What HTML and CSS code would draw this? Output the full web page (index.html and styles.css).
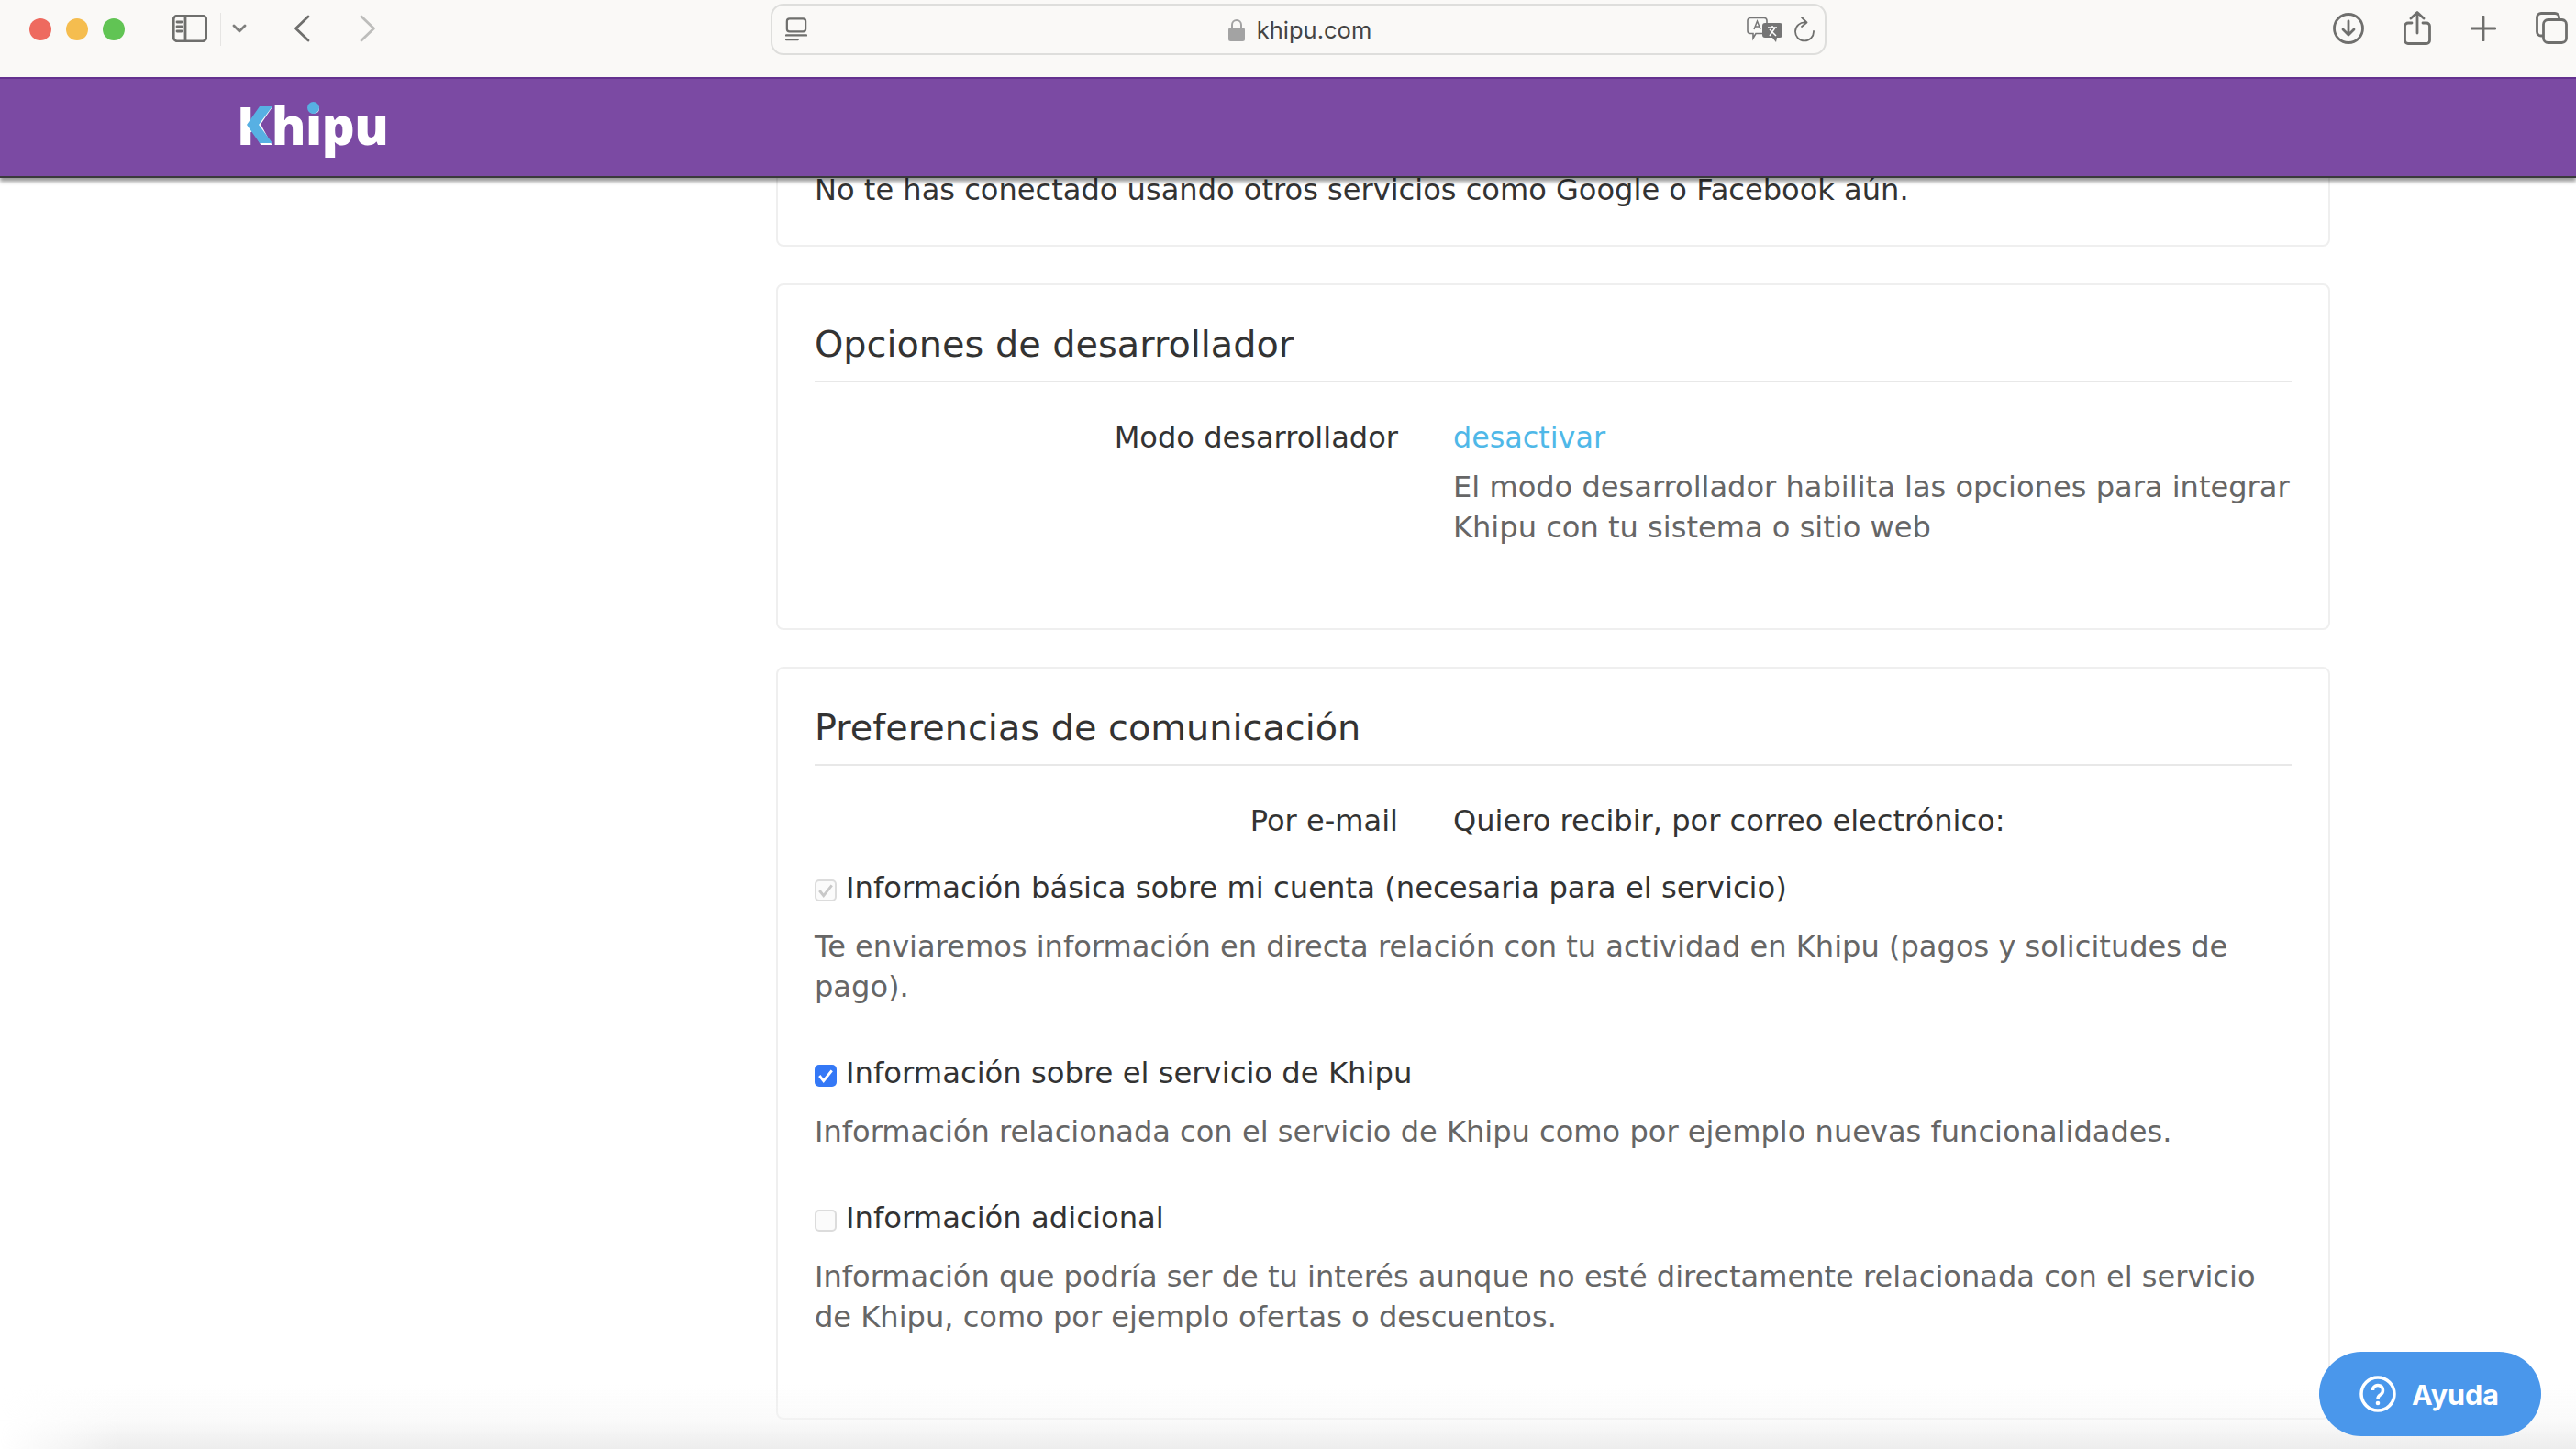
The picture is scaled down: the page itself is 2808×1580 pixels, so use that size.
FILE: index.html
```html
<!DOCTYPE html>
<html>
<head>
  <title>Khipu</title>
  <link rel="stylesheet" href="styles.css">
</head>
<body>
  <div class="toolbar">
    <div class="lights">
      <span class="light red"></span>
      <span class="light yellow"></span>
      <span class="light green"></span>
    </div>
    <svg class="ico sidebar-ico" width="38" height="30" viewBox="0 0 38 30"><rect x="1.2" y="1.2" width="35.6" height="27.6" rx="4"/><path d="M14 1.5v27M5 8h5M5 13h5M5 18h5"/></svg>
    <span class="divider"></span>
    <svg class="ico menu-ico" width="16" height="10" viewBox="0 0 16 10"><path d="M2 2l6 6 6-6"/></svg>
    <svg class="ico back-ico" width="18" height="30" viewBox="0 0 18 30"><path d="M16 2L2.500 15 16 28"/></svg>
    <svg class="ico fwd-ico" width="18" height="30" viewBox="0 0 18 30"><path d="M2 2l13.500 13L2 28"/></svg>
    <div class="address">
      <svg class="ico reader-ico" width="24" height="28" viewBox="0 0 26 28"><rect x="2" y="1.500" width="22" height="15" rx="3"/><path d="M1 21h24M1 26h14"/></svg>
      <div class="url">
        <svg width="18" height="25" viewBox="0 0 18 25"><path d="M4 11V7a5 5 0 0 1 10 0v4" fill="none" stroke="#a3a3a3" stroke-width="2"/><rect y="10" width="18" height="15" rx="2.500" fill="#a3a3a3"/></svg>
        <span>khipu.com</span>
      </div>
      <svg class="translate-ico" width="40" height="28" viewBox="0 0 40 28"><path d="M4 1.500h15a3 3 0 0 1 3 3v11a3 3 0 0 1-3 3h-9l-3 5v-5H4a3 3 0 0 1-3-3v-11a3 3 0 0 1 3-3z" fill="#fafaf8" stroke="#777" stroke-width="1.600"/><path d="M8 14l3.500-9 3.500 9M9.500 11h4" fill="none" stroke="#777" stroke-width="1.500"/><path d="M20 7h16a3 3 0 0 1 3 3v10a3 3 0 0 1-3 3h-3l-1 5-4-5h-8a3 3 0 0 1-3-3V10a3 3 0 0 1 3-3z" fill="#757575"/><path d="M23 12h10M28 10v2M25 21l6-9M25 14l7 7" fill="none" stroke="#fff" stroke-width="1.500"/></svg>
      <svg class="ico reload-ico" width="24" height="28" viewBox="0 0 24 28"><path d="M13 6.500A10 10 0 1 0 22 16M9 1l5.500 5.500L9 11"/></svg>
    </div>
    <div class="tools">
      <svg class="ico" width="34" height="34" viewBox="0 0 34 34"><circle cx="17" cy="17" r="15.500"/><path d="M17 9v15M11 18l6 6 6-6"/></svg>
      <svg class="ico" width="30" height="37" viewBox="0 0 30 37"><path d="M9 13H5a3.500 3.500 0 0 0-3.500 3.500V32A3.500 3.500 0 0 0 5 35.500h20a3.500 3.500 0 0 0 3.500-3.500V16.500A3.500 3.500 0 0 0 25 13h-4M15 24V2M8 8l7-6.500L22 8"/></svg>
      <svg class="ico" width="28" height="28" viewBox="0 0 28 28"><path d="M14 1v26M1 14h26"/></svg>
      <svg class="ico" width="35" height="35" viewBox="0 0 35 35"><path d="M7 26H6a4.500 4.500 0 0 1-4.500-4.500V6A4.500 4.500 0 0 1 6 1.500h15A4.500 4.500 0 0 1 25.500 6v2"/><rect x="8.500" y="8.500" width="25" height="25" rx="5"/></svg>
    </div>
  </div>

  <header class="topbar">
    <div class="logo"><span class="logo-k">K<svg width="28" height="40" viewBox="0 0 28 40"><polygon points="14,0 28,0 13,20 28,40 14,40 0,20" fill="#57b0e3"/></svg></span>h<span class="logo-i">i</span>pu</div>
  </header>

  <main class="content">
    <section class="card first-card">
      <p class="plain">No te has conectado usando otros servicios como Google o Facebook aún.</p>
    </section>

    <section class="card">
      <h2>Opciones de desarrollador</h2>
      <div class="row">
        <div class="row-label">Modo desarrollador</div>
        <div>
          <a class="link" href="#">desactivar</a>
          <p class="hint">El modo desarrollador habilita las opciones para integrar Khipu con tu sistema o sitio web</p>
        </div>
      </div>
    </section>

    <section class="card prefs">
      <h2>Preferencias de comunicación</h2>
      <div class="row">
        <div class="row-label">Por e-mail</div>
        <div class="plain">Quiero recibir, por correo electrónico:</div>
      </div>

      <div class="option">
        <label class="check-line"><span class="box locked"><svg width="18" height="16" viewBox="0 0 16 14"><path d="M2 7l4 5 8-10" fill="none" stroke="#c8c8c8" stroke-width="2.500"/></svg></span>Información básica sobre mi cuenta (necesaria para el servicio)</label>
        <p class="hint">Te enviaremos información en directa relación con tu actividad en Khipu (pagos y solicitudes de pago).</p>
      </div>

      <div class="option">
        <label class="check-line"><span class="box checked"><svg width="18" height="16" viewBox="0 0 16 14"><path d="M2 7l4 5 8-10" fill="none" stroke="#fff" stroke-width="2.500"/></svg></span>Información sobre el servicio de Khipu</label>
        <p class="hint">Información relacionada con el servicio de Khipu como por ejemplo nuevas funcionalidades.</p>
      </div>

      <div class="option">
        <label class="check-line"><span class="box"></span>Información adicional</label>
        <p class="hint">Información que podría ser de tu interés aunque no esté directamente relacionada con el servicio de Khipu, como por ejemplo ofertas o descuentos.</p>
      </div>
    </section>
  </main>

  <div class="bottom-fade"></div>

  <button class="help" type="button">
    <svg width="40" height="40" viewBox="0 0 40 40"><circle cx="20" cy="20" r="18" fill="none" stroke="#fff" stroke-width="3.500"/><path d="M14.500 16a5.500 5.500 0 1 1 8.500 4.600c-2 1.300-3 2-3 4.400" fill="none" stroke="#fff" stroke-width="3.500"/><circle cx="20" cy="30" r="2.300" fill="#fff"/></svg>
    Ayuda
  </button>
</body>
</html>
```

FILE: styles.css
```css
html, body {
  margin: 0;
  height: 100%;
}

body {
  position: relative;
  height: 1580px;
  overflow: hidden;
  background: #fff;
  font-family: 'DejaVu Sans', Verdana, sans-serif;
  color: #333;
}

.toolbar {
  position: relative;
  z-index: 3;
  display: flex;
  align-items: flex-start;
  height: 84px;
  background: #faf9f7;
}

.ico {
  fill: none;
  stroke: #6f6f6d;
  stroke-width: 2.800;
  stroke-linecap: round;
  stroke-linejoin: round;
  flex: none;
}

.lights {
  display: flex;
  gap: 16px;
  margin: 20px 0 0 32px;
}

.light {
  width: 24px;
  height: 24px;
  border-radius: 50%;
}

.red { background: #ee6a5f; }
.yellow { background: #f5bd4f; }
.green { background: #61c454; }

.sidebar-ico { margin: 16px 0 0 52px; }

.divider {
  width: 1px;
  height: 36px;
  margin: 14px 0 0 14px;
  background: #e6e5e3;
}

.menu-ico {
  margin: 26px 0 0 12px;
  stroke: #7f7f7d;
}

.back-ico { margin: 16px 0 0 51px; }

.fwd-ico {
  margin: 16px 0 0 54px;
  stroke: #bdbdbb;
}

.address {
  display: flex;
  align-items: center;
  width: 1151px;
  height: 56px;
  margin: 4px 0 0 430px;
  padding: 0 10px 0 14px;
  box-sizing: border-box;
  border: 2px solid #dededc;
  border-radius: 14px;
}

.reader-ico { stroke-width: 2.400; }

.url {
  flex: 1;
  display: flex;
  align-items: center;
  justify-content: center;
  gap: 13px;
  margin-left: 50px;
  font-family: 'Inter', sans-serif;
  font-size: 25.500px;
  color: #444;
}

.translate-ico { flex: none; }

.reload-ico {
  margin-left: 11px;
  stroke-width: 1.800;
}

.tools {
  display: flex;
  align-items: center;
  gap: 43px;
  margin: 12px 0 0 552px;
}

.topbar {
  position: relative;
  z-index: 2;
  height: 110px;
  box-sizing: border-box;
  padding-left: 258px;
  background: #7b4aa3;
  border-top: 2px solid #643190;
  border-bottom: 2px solid #3a3a3c;
  box-shadow: 0 4px 4px rgba(0,0,0,0.4);
}

.logo {
  font-family: 'Open Sans', sans-serif;
  font-size: 56px;
  font-weight: 800;
  line-height: 1;
  color: #fff;
  letter-spacing: -0.500px;
  padding-top: 22px;
}

.logo-k,
.logo-i {
  position: relative;
  display: inline-block;
}

.logo-k svg {
  position: absolute;
  left: 11px;
  top: 8px;
}

/* blue dot over the i */
.logo-i::after {
  content: "";
  position: absolute;
  left: 50%;
  top: 3px;
  width: 13px;
  height: 13px;
  margin-left: -6.500px;
  border-radius: 50%;
  background: #57b0e3;
}

.content {
  width: 1694px;
  margin: 0 0 0 846px;
}

.card {
  box-sizing: border-box;
  border: 2px solid #efefef;
  border-radius: 8px;
  padding: 0 40px 88px;
  margin-bottom: 40px;
}

.first-card {
  height: 99px;
  margin-top: -24px;
  padding-top: 13px;
  padding-bottom: 0;
}

.plain {
  margin: 0;
  font-size: 32.100px;
  line-height: 44px;
  color: #333;
}

h2 {
  margin: 0 0 38px;
  padding: 39px 0 15px;
  font-size: 39.800px;
  font-weight: 400;
  line-height: 50px;
  color: #333;
  border-bottom: 2px solid #e8e8e8;
}

.row {
  display: grid;
  grid-template-columns: 636px 1fr;
  column-gap: 60px;
  font-size: 32.100px;
  line-height: 44px;
}

.row-label {
  text-align: right;
}

.link {
  font-size: 31.800px;
  color: #4fb8e8;
  text-decoration: none;
}

.hint {
  margin: 10px 0 0;
  font-size: 32.100px;
  line-height: 44px;
  color: #666;
}

.row + .option { margin-top: 29px; }

.option { margin-bottom: 50px; }

.option:last-child { margin-bottom: 0; }

.check-line {
  display: flex;
  align-items: center;
  gap: 10px;
  font-size: 32.250px;
  line-height: 44px;
  color: #333;
}

.option .hint { margin-top: 20px; }

.box {
  flex: none;
  display: flex;
  align-items: center;
  justify-content: center;
  width: 24px;
  height: 24px;
  margin-top: 6px;
  box-sizing: border-box;
  border: 2px solid #dcdcdc;
  border-radius: 5px;
  background: #fbfbfb;
}

.box.checked {
  border: 0;
  background: #3478f6;
}

/* soft grey fade at the window bottom, rounded off at the corners */
.bottom-fade {
  position: absolute;
  left: 0;
  right: 0;
  bottom: 0;
  height: 70px;
  background: linear-gradient(rgba(240,240,240,0), rgba(245,245,245,0.5) 55%, #ededed);
  -webkit-mask-image: linear-gradient(to right, transparent, #000 130px);
  mask-image: linear-gradient(to right, transparent, #000 130px);
}

.help {
  position: absolute;
  left: 2528px;
  top: 1474px;
  display: flex;
  align-items: center;
  gap: 17px;
  width: 242px;
  height: 92px;
  padding: 0 0 0 44px;
  border: 0;
  border-radius: 46px;
  background: #4a97eb;
  color: #fff;
  font-family: 'Inter', sans-serif;
  font-size: 30.500px;
  font-weight: 700;
}
```
